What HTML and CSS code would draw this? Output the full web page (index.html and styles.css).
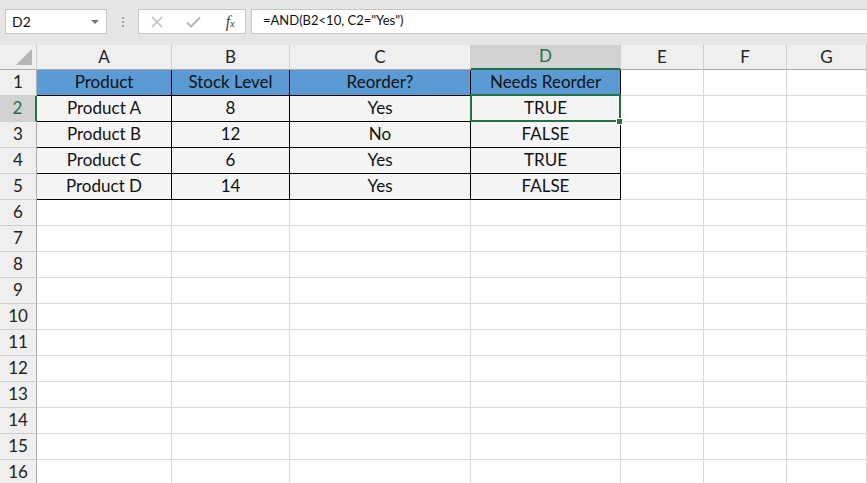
FILE: index.html
```html
<!DOCTYPE html>
<html lang="en">
<head>
    <meta charset="UTF-8">
    <meta name="viewport" content="width=device-width, initial-scale=1">
    <title>Needs Reorder</title>
    <link rel="stylesheet" href="styles.css">
</head>
<body>
    <div class="toolbar">
        <div class="name-box">
            <span>D2</span>
            <span class="caret"></span>
        </div>
        <div class="grip">
            <span></span><span></span><span></span>
        </div>
        <div class="fx-box">
            <svg class="icon" width="12" height="12" viewBox="0 0 12 12">
                <path d="M1 1 L11 11 M11 1 L1 11" stroke="#b8b8b8" stroke-width="1.4" fill="none"/>
            </svg>
            <svg class="icon" width="15" height="12" viewBox="0 0 15 12">
                <path d="M1 6.5 L5 10.5 L14 1.5" stroke="#b8b8b8" stroke-width="2" fill="none"/>
            </svg>
            <span class="fx">f<sub>x</sub></span>
        </div>
        <div class="formula">=AND(B2&lt;10, C2="Yes")</div>
    </div>

    <div class="sheet">
        <div class="row head">
            <div class="corner"><span></span></div>
            <div>A</div><div>B</div><div>C</div><div class="sel-col">D</div><div>E</div><div>F</div><div>G</div>
        </div>
        <div class="row">
            <div class="num">1</div>
            <div class="th">Product</div><div class="th">Stock Level</div><div class="th">Reorder?</div><div class="th">Needs Reorder</div>
            <div></div><div></div><div></div>
        </div>
        <div class="row">
            <div class="num sel-row">2</div>
            <div class="td">Product A</div><div class="td">8</div><div class="td">Yes</div><div class="td active">TRUE<span class="handle"></span></div>
            <div></div><div></div><div></div>
        </div>
        <div class="row">
            <div class="num">3</div>
            <div class="td">Product B</div><div class="td">12</div><div class="td">No</div><div class="td">FALSE</div>
            <div></div><div></div><div></div>
        </div>
        <div class="row">
            <div class="num">4</div>
            <div class="td">Product C</div><div class="td">6</div><div class="td">Yes</div><div class="td">TRUE</div>
            <div></div><div></div><div></div>
        </div>
        <div class="row">
            <div class="num">5</div>
            <div class="td">Product D</div><div class="td">14</div><div class="td">Yes</div><div class="td">FALSE</div>
            <div></div><div></div><div></div>
        </div>
        <div class="row"><div class="num">6</div><div></div><div></div><div></div><div></div><div></div><div></div><div></div></div>
        <div class="row"><div class="num">7</div><div></div><div></div><div></div><div></div><div></div><div></div><div></div></div>
        <div class="row"><div class="num">8</div><div></div><div></div><div></div><div></div><div></div><div></div><div></div></div>
        <div class="row"><div class="num">9</div><div></div><div></div><div></div><div></div><div></div><div></div><div></div></div>
        <div class="row"><div class="num">10</div><div></div><div></div><div></div><div></div><div></div><div></div><div></div></div>
        <div class="row"><div class="num">11</div><div></div><div></div><div></div><div></div><div></div><div></div><div></div></div>
        <div class="row"><div class="num">12</div><div></div><div></div><div></div><div></div><div></div><div></div><div></div></div>
        <div class="row"><div class="num">13</div><div></div><div></div><div></div><div></div><div></div><div></div><div></div></div>
        <div class="row"><div class="num">14</div><div></div><div></div><div></div><div></div><div></div><div></div><div></div></div>
        <div class="row"><div class="num">15</div><div></div><div></div><div></div><div></div><div></div><div></div><div></div></div>
        <div class="row"><div class="num">16</div><div></div><div></div><div></div><div></div><div></div><div></div><div></div></div>
    </div>
</body>
</html>
```

FILE: styles.css
```css
body {
    margin: 0;
    font-family: Lato, "Open Sans", sans-serif;
    background-color: #fff;
    color: #111;
    overflow: hidden;
}
.toolbar {
    display: flex;
    align-items: flex-start;
    height: 45px;
    box-sizing: border-box;
    padding: 9px 0 0 5px;
    background-color: #e6e6e6;
}
.name-box {
    display: flex;
    align-items: center;
    justify-content: space-between;
    width: 102px;
    height: 25px;
    box-sizing: border-box;
    padding: 0 7px 0 6px;
    background-color: #fff;
    border: 1px solid #c6c6c6;
    font-size: 14px;
}
.caret {
    width: 0;
    height: 0;
    border-left: 4px solid transparent;
    border-right: 4px solid transparent;
    border-top: 4px solid #777;
}
.grip {
    display: flex;
    flex-direction: column;
    justify-content: center;
    align-items: center;
    gap: 2px;
    width: 31px;
    height: 25px;
}
.grip span {
    width: 2px;
    height: 2px;
    background-color: #a6a6a6;
}
.fx-box {
    display: flex;
    align-items: center;
    width: 108px;
    height: 25px;
    box-sizing: border-box;
    padding: 0 10px 0 12px;
    background-color: #fff;
    border: 1px solid #c6c6c6;
}
.fx-box .icon {
    margin-right: 23px;
}
.fx {
    margin-left: auto;
    font-family: "Liberation Serif", serif;
    font-style: italic;
    font-size: 16px;
    color: #444;
}
.fx sub {
    font-size: 11px;
    vertical-align: 0;
}
.formula {
    flex-grow: 1;
    height: 25px;
    box-sizing: border-box;
    margin-left: 5px;
    padding: 2px 0 0 11px;
    background-color: #fff;
    border: 1px solid #c6c6c6;
    border-right: none;
    font-size: 13px;
}
.row {
    display: grid;
    grid-template-columns: 37px 135px 118px 181px 150px 83px 83px 1fr;
    height: 26px;
}
.row > div {
    box-sizing: border-box;
    border-right: 1px solid #d9d9d9;
    border-bottom: 1px solid #d9d9d9;
    display: flex;
    align-items: center;
    justify-content: center;
    font-size: 17px;
    padding-bottom: 2px;
}
.row.head {
    height: 25px;
}
.row.head > div {
    background-color: #efefef;
    border-right-color: #cfcfcf;
    border-bottom-color: #ababab;
    color: #222;
}
.row.head > .sel-col {
    background-color: #d2d2d2;
    color: #217346;
    border-bottom: 2px solid #217346;
}
.corner {
    position: relative;
}
.corner span {
    position: absolute;
    right: 4px;
    bottom: 4px;
    width: 0;
    height: 0;
    border-left: 16px solid transparent;
    border-bottom: 16px solid #b5b5b5;
}
.row > .num {
    background-color: #efefef;
    border-right-color: #ababab;
    border-bottom-color: #cfcfcf;
    color: #222;
}
.row > .num.sel-row {
    background-color: #d2d2d2;
    color: #217346;
    border-right: 2px solid #217346;
}
.row > .th {
    background-color: #5b9bd5;
    border-right-color: #000;
    border-bottom-color: #000;
}
.row > .td {
    background-color: #f4f4f4;
    border-right-color: #000;
    border-bottom-color: #000;
}
.td.active {
    position: relative;
}
.td.active::after {
    content: "";
    position: absolute;
    top: -2px;
    left: -1px;
    right: -1px;
    bottom: -1px;
    border: 2px solid #217346;
}
.handle {
    position: absolute;
    right: -3px;
    bottom: -4px;
    width: 5px;
    height: 5px;
    background-color: #217346;
    border: 1px solid #fff;
    z-index: 2;
}
```
